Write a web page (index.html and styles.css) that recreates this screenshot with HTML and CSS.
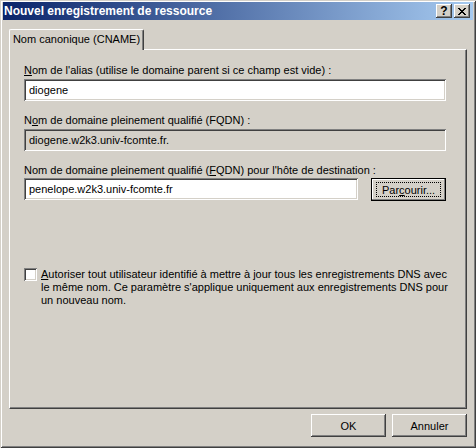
FILE: index.html
```html
<!DOCTYPE html>
<html lang="fr">
<head>
<meta charset="utf-8">
<title>Nouvel enregistrement de ressource</title>
<link rel="stylesheet" href="styles.css">
</head>
<body>
<div class="window">
  <div class="titlebar">
    <span class="title">Nouvel enregistrement de ressource</span>
    <div class="tb-buttons">
      <div class="tb-btn help">?</div>
      <div class="tb-btn close">
        <svg width="8" height="7" viewBox="0 0 8 7" shape-rendering="crispEdges">
          <path fill="#000" d="M0 0h2v1h-2zM6 0h2v1h-2zM1 1h2v1h-2zM5 1h2v1h-2zM2 2h4v1h-4zM3 3h2v1h-2zM2 4h4v1h-4zM1 5h2v1h-2zM5 5h2v1h-2zM0 6h2v1h-2zM6 6h2v1h-2z"/>
        </svg>
      </div>
    </div>
  </div>
  <div class="body">
    <div class="tabs">
      <div class="tab">Nom canonique (CNAME)</div>
    </div>
    <div class="panel">
      <div class="lbl first"><u>N</u>om de l'alias (utilise le domaine parent si ce champ est vide) :</div>
      <div class="edit">diogene</div>
      <div class="lbl">N<u>o</u>m de domaine pleinement qualifié (FQDN) :</div>
      <div class="edit readonly">diogene.w2k3.univ-fcomte.fr.</div>
      <div class="lbl">Nom de domaine pleinement qualifié (<u>F</u>QDN) pour l'hôte de destination :</div>
      <div class="row">
        <div class="edit short">penelope.w2k3.univ-fcomte.fr</div>
        <div class="btn default"><span class="focus">Par<u>c</u>ourir...</span></div>
      </div>
      <div class="check-row">
        <span class="checkbox"></span>
        <span class="check-text"><u>A</u>utoriser tout utilisateur identifié à mettre à jour tous les enregistrements DNS avec<br>le même nom. Ce paramètre s'applique uniquement aux enregistrements DNS pour<br>un nouveau nom.</span>
      </div>
    </div>
    <div class="actions">
      <div class="btn">OK</div>
      <div class="btn">Annuler</div>
    </div>
  </div>
</div>
</body>
</html>
```
FILE: styles.css
```css
html, body {
  margin: 0;
  padding: 0;
  background: #d4d0c8;
}

.window {
  width: 476px;
  height: 448px;
  box-sizing: border-box;
  background: #d4d0c8;
  padding: 2px 3px 3px 3px;
  box-shadow: inset 1px 1px #d4d0c8, inset -1px -1px #404040, inset 2px 2px #ffffff, inset -2px -2px #808080;
  display: flex;
  flex-direction: column;
  font-family: "Liberation Sans", Arial, sans-serif;
  font-size: 11px;
  color: #000;
}

.titlebar {
  height: 18px;
  flex: none;
  background: linear-gradient(to right, #0a246a, #a6caf0);
  display: flex;
  align-items: center;
  padding: 0 3px 0 1px;
}

.title {
  color: #fff;
  font-weight: bold;
  font-size: 12px;
  white-space: nowrap;
}

.tb-buttons {
  margin-left: auto;
  display: flex;
  gap: 2px;
}

.tb-btn {
  width: 16px;
  height: 14px;
  box-sizing: border-box;
  background: #d4d0c8;
  box-shadow: inset -1px -1px #404040, inset 1px 1px #ffffff, inset -2px -2px #808080;
  display: flex;
  align-items: center;
  justify-content: center;
}

.tb-btn.help {
  font-weight: bold;
  font-size: 12px;
  line-height: 14px;
}

.body {
  flex: 1;
  padding: 9px 6px 8px 6px;
  display: flex;
  flex-direction: column;
}

.tabs {
  display: flex;
  height: 20px;
  flex: none;
}

.tab {
  width: 135px;
  height: 21px;
  box-sizing: border-box;
  border-top: 1px solid #fff;
  border-left: 1px solid #fff;
  border-right: 1px solid #404040;
  border-radius: 2px 2px 0 0;
  box-shadow: inset -1px 0 #808080;
  background: #d4d0c8;
  position: relative;
  z-index: 1;
  display: flex;
  align-items: center;
  justify-content: center;
  padding-bottom: 2px;
  white-space: nowrap;
}

.panel {
  height: 360px;
  flex: none;
  box-sizing: border-box;
  border-top: 1px solid #fff;
  border-left: 1px solid #fff;
  border-right: 1px solid #404040;
  border-bottom: 1px solid #404040;
  box-shadow: inset -1px -1px #808080;
  padding: 14px 20px 0 14px;
  display: flex;
  flex-direction: column;
}

.lbl {
  line-height: 13px;
  height: 13px;
  margin-top: 13px;
  white-space: nowrap;
}

.lbl.first {
  margin-top: 0;
}

.edit {
  height: 22px;
  box-sizing: border-box;
  margin-top: 2px;
  background: #fff;
  box-shadow: inset 1px 1px #808080, inset -1px -1px #ffffff, inset 2px 2px #404040, inset -2px -2px #d4d0c8;
  padding: 0 5px;
  line-height: 22px;
  white-space: nowrap;
}

.edit.readonly {
  background: #d4d0c8;
}

.row {
  display: flex;
  margin-top: 1px;
  gap: 13px;
}

.edit.short {
  width: 335px;
  margin-top: 0;
}

.btn {
  width: 75px;
  height: 23px;
  box-sizing: border-box;
  background: #d4d0c8;
  box-shadow: inset -1px -1px #404040, inset 1px 1px #ffffff, inset -2px -2px #808080;
  display: flex;
  align-items: center;
  justify-content: center;
  white-space: nowrap;
}

.btn.default {
  border: 1px solid #000;
  box-shadow: inset -1px -1px #808080, inset 1px 1px #ffffff;
}

.focus {
  display: flex;
  align-items: center;
  justify-content: center;
  width: 65px;
  height: 15px;
  box-sizing: border-box;
  border: 1px dotted #000;
}

.check-row {
  display: flex;
  margin-top: 67px;
  gap: 4px;
}

.checkbox {
  width: 13px;
  height: 13px;
  flex: none;
  box-sizing: border-box;
  background: #fff;
  box-shadow: inset 1px 1px #808080, inset -1px -1px #ffffff, inset 2px 2px #404040, inset -2px -2px #d4d0c8;
}

.check-text {
  line-height: 13px;
  white-space: nowrap;
}

.actions {
  display: flex;
  justify-content: flex-end;
  gap: 6px;
  margin-top: 5px;
}
```
